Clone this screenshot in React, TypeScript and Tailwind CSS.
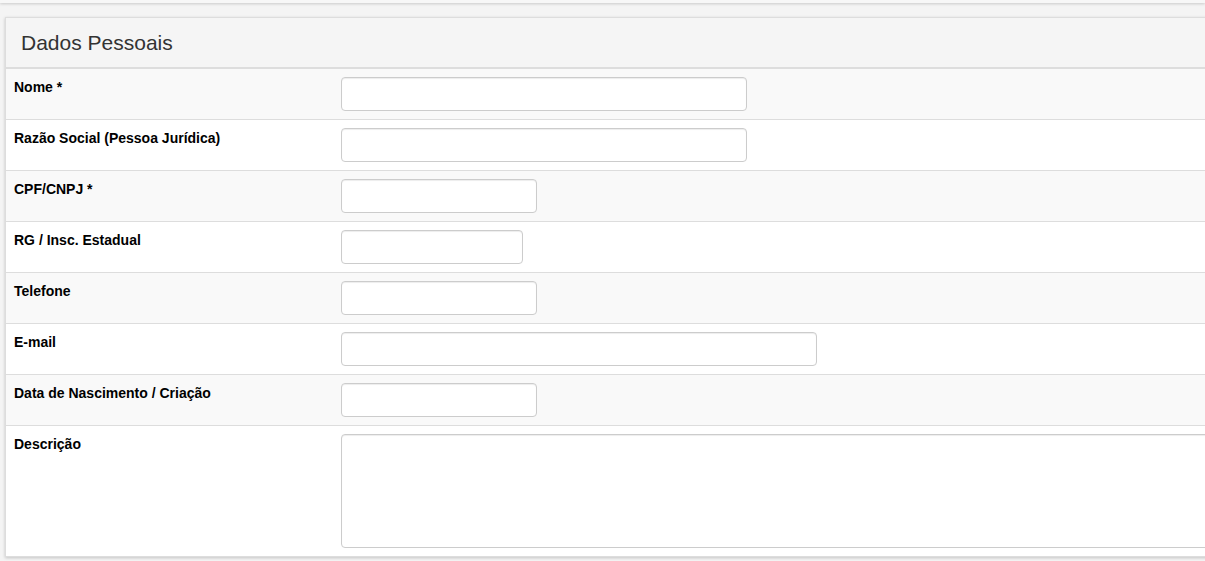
import React from "react";

type Field = {
    label: string;
    width: string;
    textarea?: boolean;
};

const fields: Field[] = [
    { label: "Nome *", width: "w-[406px]" },
    { label: "Razão Social (Pessoa Jurídica)", width: "w-[406px]" },
    { label: "CPF/CNPJ *", width: "w-[196px]" },
    { label: "RG / Insc. Estadual", width: "w-[182px]" },
    { label: "Telefone", width: "w-[196px]" },
    { label: "E-mail", width: "w-[476px]" },
    { label: "Data de Nascimento / Criação", width: "w-[196px]" },
    { label: "Descrição", width: "w-[900px]", textarea: true },
];

export default function App() {
    return (
        <div className="h-[561px] w-screen overflow-hidden bg-[#f4f4f4] font-['Liberation_Sans',Arial,sans-serif]">
            {/* bottom of the card above */}
            <div className="h-[3px] w-full bg-[#f7f7f7] shadow-[0_1px_3px_rgba(0,0,0,0.18)]" />

            <div className="ml-[5px] mt-[14px] w-[1260px] border border-[#dddddd] bg-white shadow-[0_1px_3px_rgba(0,0,0,0.2)]">
                <div className="flex h-[51px] items-center border-b-2 border-[#dddddd] bg-[#f5f5f5] pl-[15px]">
                    <h3 className="text-[21px] leading-[24px] text-[#333333]">Dados Pessoais</h3>
                </div>

                {fields.map((f, i) => (
                    <div
                        key={f.label}
                        className={`flex py-2 ${i % 2 === 0 ? "bg-[#f9f9f9]" : "bg-white"} ${
                            i < fields.length - 1 ? "border-b border-[#dddddd]" : ""
                        }`}
                    >
                        <label className="w-[335px] shrink-0 pl-2 pt-[2px] text-[14px] font-bold leading-[17px] text-black">
                            {f.label}
                        </label>
                        {f.textarea ? (
                            <textarea
                                className={`${f.width} h-[114px] resize-none rounded-[4px] border border-[#cccccc] bg-white shadow-[inset_0_1px_1px_rgba(0,0,0,0.075)] outline-none`}
                            />
                        ) : (
                            <input
                                type="text"
                                className={`${f.width} h-[34px] rounded-[4px] border border-[#cccccc] bg-white shadow-[inset_0_1px_1px_rgba(0,0,0,0.075)] outline-none`}
                            />
                        )}
                    </div>
                ))}
            </div>
        </div>
    );
}
